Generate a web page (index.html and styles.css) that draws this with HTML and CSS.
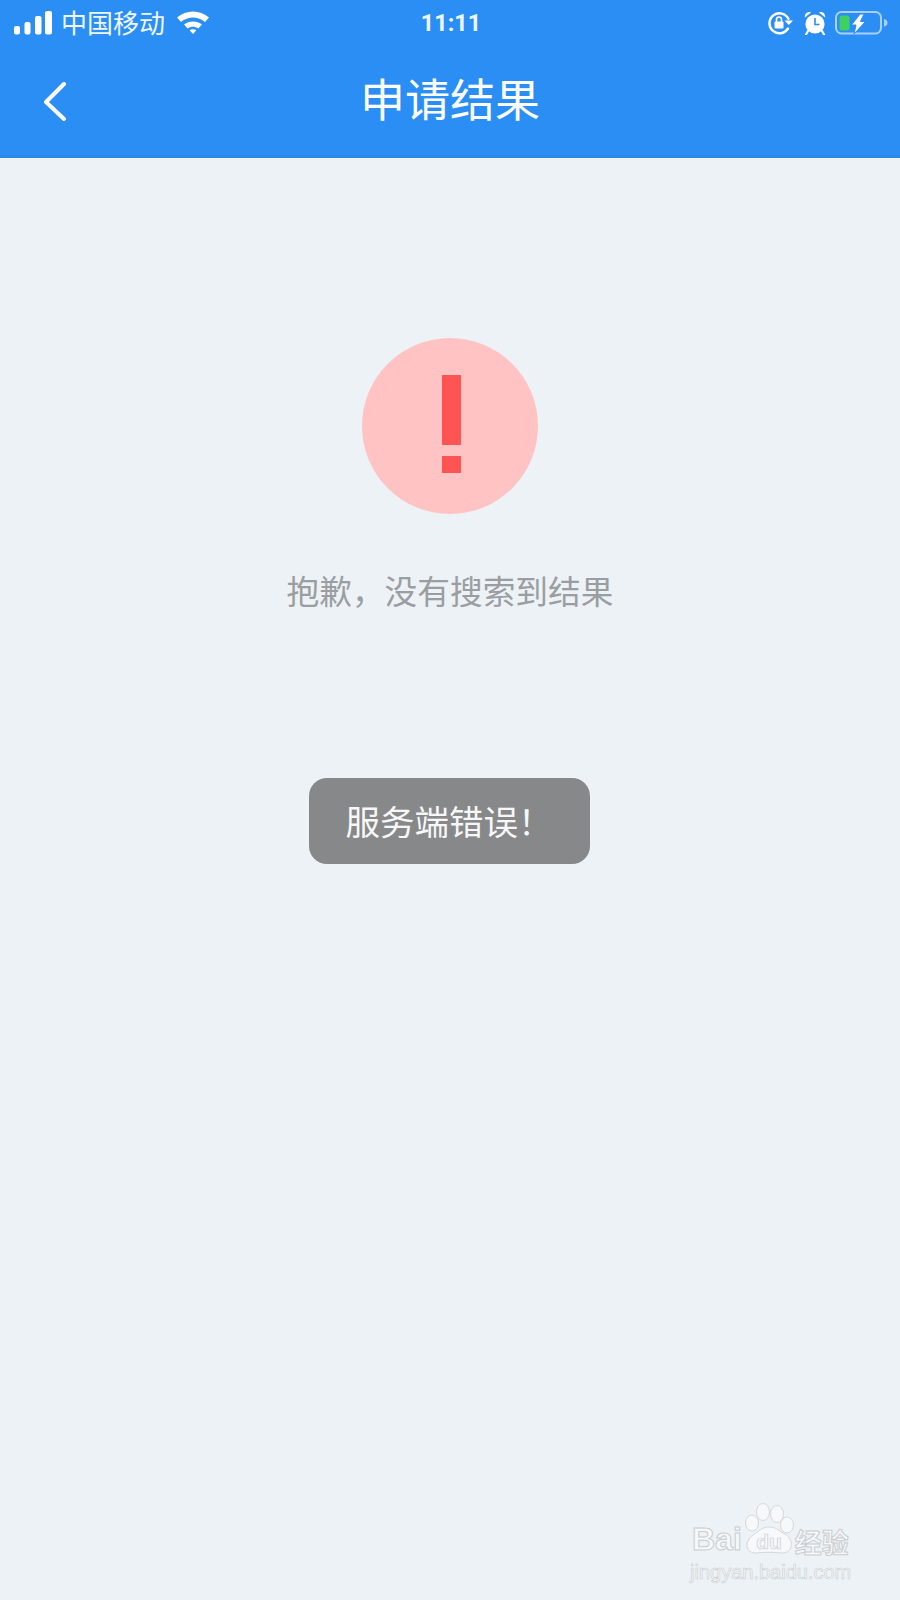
FILE: index.html
```html
<!DOCTYPE html>
<html lang="zh-CN">
<head>
  <meta charset="UTF-8" />
  <meta name="viewport" content="width=device-width, initial-scale=1.0"/>
  <title>申请结果</title>
  <link rel="stylesheet" href="styles.css">
</head>
<body>
  <div class="page">
    <header class="top">
      <div class="status-bar">
        <div class="status-left">
          <svg class="signal" width="38" height="24" viewBox="0 0 38 24">
            <rect x="0" y="15" width="6" height="8.5" rx="2"/>
            <rect x="10.5" y="11" width="6" height="12.5" rx="2"/>
            <rect x="21" y="5" width="6.5" height="18.5" rx="2"/>
            <rect x="31" y="0" width="7" height="23.5" rx="2"/>
          </svg>
          <span class="carrier">中国移动</span>
          <svg class="wifi" width="34" height="25" viewBox="0 0 34 25">
            <path d="M1 8.5 C10 0.5 24 0.5 33 8.5 L29 13 C22 7 12 7 5 13 Z"/>
            <path d="M8 15.5 C13 11.5 21 11.5 26 15.5 L22.3 19.6 C19 17.2 15 17.2 11.7 19.6 Z"/>
            <path d="M13.6 21.2 C15.6 20 18.4 20 20.4 21.2 L17 25 Z"/>
          </svg>
        </div>
        <span class="clock">11:11</span>
        <div class="status-right">
          <svg class="rotate-lock" width="26" height="24" viewBox="0 0 26 24">
            <path d="M21 17.5 A10 10 0 1 1 21.5 8" fill="none" stroke="#fff" stroke-width="2.4" stroke-linecap="round"/>
            <path d="M17.5 9.5 L26 9.5 L21.8 14 Z" fill="#fff"/>
            <rect x="7.5" y="10.5" width="9" height="7" rx="1" fill="#fff"/>
            <path d="M9.5 11 V8.5 A2.5 2.5 0 0 1 14.5 8.5 V11" fill="none" stroke="#fff" stroke-width="1.6"/>
          </svg>
          <svg class="alarm" width="22" height="24" viewBox="0 0 22 24">
            <circle cx="11" cy="13" r="9.6" fill="#fff"/>
            <path d="M0.8 6.5 C0.5 2.5 4 0 7 1.6 Z M21.2 6.5 C21.5 2.5 18 0 15 1.6 Z" fill="#fff"/>
            <path d="M4 20 L2 23.5 M18 20 L20 23.5" stroke="#fff" stroke-width="2.2" stroke-linecap="round"/>
            <path d="M11 7 V13.5 H15.5" fill="none" stroke="#2a8ef4" stroke-width="1.6"/>
          </svg>
          <svg class="battery" width="53" height="24" viewBox="0 0 53 24">
            <rect x="1" y="1" width="45" height="21.5" rx="5.5" fill="none" stroke="#a9cffa" stroke-width="2"/>
            <rect x="4.5" y="4.5" width="10" height="15" rx="2.5" fill="#3fd160"/>
            <path d="M49 8 C51.5 8.5 52.5 10 52.5 12 C52.5 14 51.5 15 49 15.5 Z" fill="#a9cffa"/>
            <path d="M25 3 L16.5 14 H21 L19 23 L30.5 10.5 H25.5 L29 3 Z" fill="#fff" stroke="#2a8ef4" stroke-width="1"/>
          </svg>
        </div>
      </div>
      <nav class="nav-bar">
        <svg class="back" width="24" height="40" viewBox="0 0 24 40">
          <path d="M21 2 L3 20 L21 37" fill="none" stroke="#fff" stroke-width="4" stroke-linecap="round" stroke-linejoin="round"/>
        </svg>
        <h1 class="title">申请结果</h1>
      </nav>
    </header>

    <main class="result">
      <div class="alert-circle">
        <span class="alert-bar"></span>
        <span class="alert-dot"></span>
      </div>
      <p class="message">抱歉，没有搜索到结果</p>
      <div class="toast">服务端错误！</div>
    </main>

    <div class="watermark">
      <div class="wm-logo">
        <span class="wm-bai">Bai</span>
        <svg class="wm-paw" width="50" height="52" viewBox="0 0 50 52">
          <g fill="#f6f8fa" stroke="#d5d8db" stroke-width="1">
            <ellipse cx="7" cy="20" rx="6.5" ry="8"/>
            <ellipse cx="18" cy="9" rx="6.5" ry="8.5"/>
            <ellipse cx="32" cy="11" rx="6.5" ry="8.5"/>
            <ellipse cx="42" cy="22" rx="6.5" ry="8"/>
            <path d="M24 24 C31 24 34 28 40 31 C50 37 48 51 36 50 C28 49 20 49 12 50 C0 51 -1 38 8 32 C14 28 17 24 24 24 Z"/>
          </g>
          <text x="24" y="46" class="wm-du">du</text>
        </svg>
        <span class="wm-cn">经验</span>
      </div>
      <div class="wm-url">jingyan.baidu.com</div>
    </div>
  </div>
</body>
</html>
```

FILE: styles.css
```css
body {
  margin: 0;
  padding: 0;
  background-color: #edf2f6;
  font-family: "Noto Sans CJK SC", "Noto Sans", sans-serif;
}

.page {
  position: relative;
  height: 1600px;
  overflow: hidden;
}

.top {
  background-color: #2a8ef4;
  border-bottom: 3px solid #2a88e6;
  color: #fff;
}

.status-bar {
  display: grid;
  grid-template-columns: 1fr auto 1fr;
  align-items: center;
  height: 46px;
  padding: 0 12px 0 14px;
}

.status-left,
.status-right {
  display: flex;
  align-items: center;
}

.signal,
.wifi,
.rotate-lock,
.alarm,
.battery {
  fill: #fff;
  display: block;
}

.carrier {
  margin-left: 9px;
  margin-top: -3px;
  font-size: 26px;
  line-height: 46px;
  color: #eef6ff;
}

.wifi {
  margin-left: 11px;
  margin-top: -4px;
}

.clock {
  font-family: "Roboto", sans-serif;
  font-size: 23.5px;
  font-weight: 700;
  color: #eef6ff;
}

.status-right {
  justify-content: flex-end;
  gap: 11px;
}

.rotate-lock {
  margin-left: 2px;
}

.alarm {
  margin-right: -2px;
}

.nav-bar {
  display: grid;
  grid-template-columns: 1fr auto 1fr;
  align-items: center;
  height: 109px;
}

.back {
  display: block;
  margin: 2px 0 0 43px;
}

.title {
  margin: -6px 0 0;
  font-size: 45px;
  font-weight: 400;
  line-height: 60px;
  color: #fff;
}

.result {
  display: flex;
  flex-direction: column;
  align-items: center;
  padding-top: 180px;
}

.alert-circle {
  display: flex;
  flex-direction: column;
  align-items: center;
  width: 176px;
  height: 176px;
  padding-top: 37px;
  box-sizing: border-box;
  border-radius: 50%;
  background-color: #fec3c2;
}

.alert-bar {
  width: 19px;
  height: 70px;
  margin-left: 2px;
  background-color: #fe5454;
}

.alert-dot {
  width: 19px;
  height: 17px;
  margin: 11px 0 0 2px;
  background-color: #fe5454;
}

.message {
  margin: 51px 0 0;
  font-size: 32.7px;
  line-height: 50px;
  color: #9b9ea1;
}

.toast {
  width: 281px;
  height: 86px;
  margin: 163px 2px 0 0;
  padding-left: 37px;
  box-sizing: border-box;
  border-radius: 18px;
  background-color: #87888a;
  color: #f7f7f7;
  font-size: 34.5px;
  line-height: 84px;
}

.watermark {
  position: absolute;
  left: 690px;
  top: 1503px;
  width: 164px;
  color: #f6f8fa;
}

.wm-logo {
  display: flex;
  align-items: flex-end;
  height: 52px;
}

.wm-bai {
  margin-left: 2px;
  font-family: "Liberation Sans", sans-serif;
  font-size: 32px;
  font-weight: 700;
  line-height: 32px;
  -webkit-text-stroke: 1px #c9cdd0;
}

.wm-paw {
  flex: none;
  margin-left: 3px;
}

.wm-du {
  font-family: "Liberation Sans", sans-serif;
  font-size: 21px;
  font-weight: 700;
  fill: #f6f8fa;
  stroke: #c9cdd0;
  stroke-width: 0.7;
  text-anchor: middle;
}

.wm-cn {
  font-size: 27px;
  font-weight: 700;
  line-height: 27px;
  white-space: nowrap;
  -webkit-text-stroke: 1px #c9cdd0;
}

.wm-url {
  margin-top: 6px;
  font-family: "Liberation Sans", sans-serif;
  font-size: 20px;
  line-height: 22px;
  white-space: nowrap;
  -webkit-text-stroke: 0.6px #c9cdd0;
}
```
